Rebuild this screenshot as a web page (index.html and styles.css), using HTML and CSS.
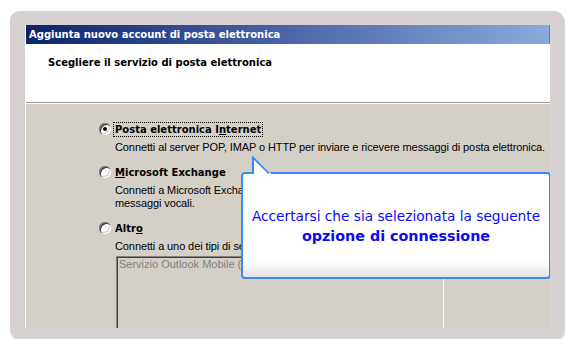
FILE: index.html
```html
<!DOCTYPE html>
<html lang="it">
<head>
<meta charset="utf-8">
<title>Aggiunta nuovo account di posta elettronica</title>
<link rel="stylesheet" href="styles.css">
</head>
<body>
<div class="frame">
  <div class="shot">
    <div class="titlebar">Aggiunta nuovo account di posta elettronica</div>
    <div class="header">
      <div class="heading">Scegliere il servizio di posta elettronica</div>
    </div>
    <div class="body">
      <div class="option">
        <div class="row"><span class="radio checked"></span><span class="label focus">Posta elettronica I<u>n</u>ternet</span></div>
        <div class="desc">Connetti al server POP, IMAP o HTTP per inviare e ricevere messaggi di posta elettronica.</div>
      </div>
      <div class="option">
        <div class="row"><span class="radio"></span><span class="label"><u>M</u>icrosoft Exchange</span></div>
        <div class="desc">Connetti a Microsoft Exchange per accedere a posta, fax e<br>messaggi vocali.</div>
      </div>
      <div class="option">
        <div class="row"><span class="radio"></span><span class="label">Altr<u>o</u></span></div>
        <div class="desc">Connetti a uno dei tipi di server seguenti.</div>
        <div class="listbox">
          <div class="item">Servizio Outlook Mobile (SMS)</div>
        </div>
      </div>
    </div>
    <div class="callout">
      <svg class="pointer" width="22" height="20" viewBox="0 0 22 20">
        <polygon points="2,0 2,19.5 20,19.5 20,17.5" fill="#ffffff"/>
        <polyline points="2,18 2,1.4 18,17.4" fill="none" stroke="#3a8cf2" stroke-width="2"/>
      </svg>
      <div class="line1">Accertarsi che sia selezionata la seguente</div>
      <div class="line2">opzione di connessione</div>
    </div>
  </div>
</div>
</body>
</html>
```

FILE: styles.css
```css
html, body {
  margin: 0;
  padding: 0;
  background: #ffffff;
}

.frame {
  margin: 11px 0 0 10px;
  width: 554px;
  height: 328px;
  box-sizing: border-box;
  padding: 14px 0 0 15px;
  border-radius: 9px;
  background: #d8d1d1;
  box-shadow: 1px 2px 1px rgba(150, 140, 140, 0.35);
}

.shot {
  position: relative;
  width: 525px;
  height: 303px;
  box-sizing: border-box;
  border-left: 1px solid #ffffff;
  background: #d4d0c8;
  overflow: hidden;
  font-family: "Liberation Sans", Arial, sans-serif;
  font-size: 11px;
  line-height: 13px;
  color: #000000;
}

.titlebar {
  height: 19px;
  box-sizing: border-box;
  padding: 1px 0 0 3px;
  line-height: 18px;
  font-family: "DejaVu Sans", sans-serif;
  font-weight: bold;
  font-size: 10px;
  color: #ffffff;
  white-space: nowrap;
  background: linear-gradient(to right, #0a246a 0%, #4a66a8 50%, #8aaadc 100%);
  border-right: 1px solid #7a7a7a;
}

.header {
  height: 58px;
  background: #ffffff;
  border-bottom: 1px solid #9a9a9a;
}

.heading {
  padding: 12px 0 0 22px;
  font-family: "DejaVu Sans", sans-serif;
  font-weight: bold;
  font-size: 10px;
  line-height: 13px;
}

.body {
  border-top: 1px solid #ffffff;
  padding: 19px 0 0 73px;
}

.option {
  margin-bottom: 12px;
}

.row {
  display: flex;
  align-items: center;
  height: 13px;
}

.radio {
  position: relative;
  flex: none;
  width: 12px;
  height: 12px;
  margin: -1px 4px 0 0;
  border-radius: 50%;
  background: #ffffff;
  box-shadow: inset 1px 1px 0 #808080, inset 2px 2px 0 #404040, inset -1px -1px 0 #ffffff, inset -2px -2px 0 #d4d0c8;
}

.radio.checked::after {
  content: "";
  position: absolute;
  left: 4px;
  top: 4px;
  width: 4px;
  height: 4px;
  border-radius: 50%;
  background: #000000;
}

.label {
  font-family: "DejaVu Sans", sans-serif;
  font-weight: bold;
  font-size: 10px;
  line-height: 13px;
  white-space: nowrap;
}

.label.focus {
  margin-left: -1px;
  padding: 0 1px;
  outline: 1px dotted #000000;
  outline-offset: 0;
}

.desc {
  margin: 5px 0 0 16px;
  white-space: nowrap;
  letter-spacing: -0.1px;
}

.listbox {
  margin: 3px 0 0 17px;
  width: 328px;
  height: 100px;
  box-sizing: border-box;
  border: 1px solid;
  border-color: #808080 #ffffff #ffffff #808080;
  box-shadow: inset 1px 1px 0 #404040;
  padding: 1px 0 0 2px;
}

.item {
  color: #808080;
  white-space: nowrap;
}

.callout {
  position: absolute;
  left: 215px;
  top: 147px;
  width: 310px;
  height: 107px;
  box-sizing: border-box;
  border: 2px solid #3a8cf2;
  border-radius: 4px;
  background: linear-gradient(to bottom, #ffffff 0%, #ffffff 84%, #e3e3e3 100%);
  display: flex;
  flex-direction: column;
  justify-content: center;
  align-items: center;
  font-family: "DejaVu Sans", sans-serif;
  color: #0a0af5;
  line-height: 20px;
  white-space: nowrap;
}

.pointer {
  position: absolute;
  left: 8px;
  top: -18px;
}

.line1 {
  font-size: 13.7px;
}

.line2 {
  font-size: 14.3px;
  font-weight: bold;
}
```
